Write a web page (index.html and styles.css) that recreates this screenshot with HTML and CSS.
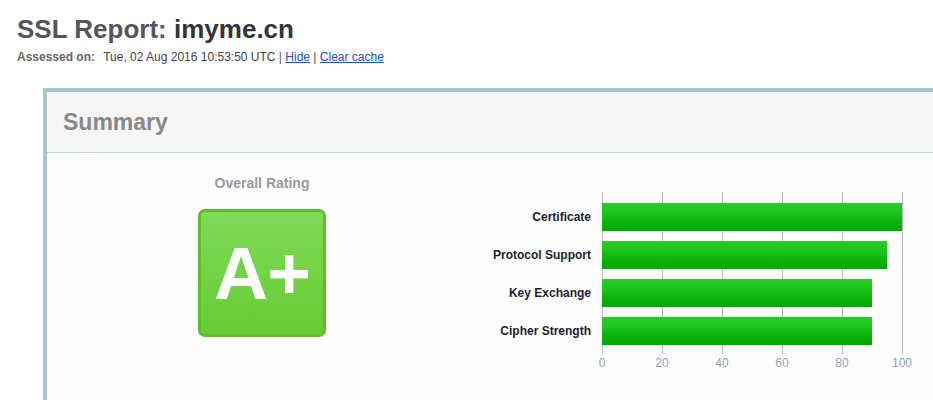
FILE: index.html
```html
<!DOCTYPE html>
<html>
<head>
<meta charset="utf-8">
<title>SSL Report: imyme.cn</title>
<link rel="stylesheet" href="styles.css">
</head>
<body>
<div class="page">
  <h1 class="title"><span class="title-pre">SSL Report:</span> <span class="title-host">imyme.cn</span></h1>
  <div class="assessed">
    <span class="assessed-label">Assessed on:</span>
    <span class="assessed-date">Tue, 02 Aug 2016 10:53:50 UTC</span>
    <span class="sep">|</span> <a href="#" class="link">Hide</a> <span class="sep">|</span> <a href="#" class="link">Clear cache</a>
  </div>

  <section class="report">
    <div class="report-head">Summary</div>
    <div class="report-body">
      <div class="rating">
        <div class="rating-title">Overall Rating</div>
        <div class="grade">A+</div>
      </div>
      <div class="chart">
        <div class="chart-main">
          <div class="labels">
            <div class="label">Certificate</div>
            <div class="label">Protocol Support</div>
            <div class="label">Key Exchange</div>
            <div class="label">Cipher Strength</div>
          </div>
          <div class="plot-wrap">
            <div class="plot">
              <div class="bar" style="width: 300px"></div>
              <div class="bar" style="width: 285px"></div>
              <div class="bar" style="width: 270px"></div>
              <div class="bar" style="width: 270px"></div>
            </div>
            <div class="axis">
              <span class="tick">0</span>
              <span class="tick">20</span>
              <span class="tick">40</span>
              <span class="tick">60</span>
              <span class="tick">80</span>
              <span class="tick">100</span>
            </div>
          </div>
        </div>
      </div>
    </div>
  </section>
</div>
</body>
</html>
```

FILE: styles.css
```css
html, body {
  margin: 0;
  padding: 0;
  overflow: hidden;
  background: #ffffff;
}

body {
  font-family: "Liberation Sans", Arial, sans-serif;
  color: #333;
}

.page {
  padding-left: 17px;
}

.title {
  margin: 14px 0 0 0;
  font-size: 26px;
  line-height: 30px;
  font-weight: bold;
}

.title-pre {
  color: #555659;
}

.title-host {
  color: #333438;
}

.assessed {
  margin-top: 6px;
  font-size: 12px;
  line-height: 14px;
  color: #444;
}

.assessed-label {
  font-weight: bold;
  color: #666;
  margin-right: 5px;
}

.sep {
  color: #555;
}

.link {
  color: #1a4fd1;
  text-decoration: underline;
}

.report {
  margin: 24px 0 0 26px;
  box-sizing: border-box;
  min-height: 312px;
  border-top: 4px solid #a8c5c8;
  border-left: 4px solid #a8c5c8;
  background: #fdfdfd;
}

.report-head {
  height: 60px;
  line-height: 60px;
  background: #f6f6f6;
  border-bottom: 1px solid #bfd6d6;
  padding-left: 16px;
  font-size: 23px;
  font-weight: bold;
  color: #88888b;
}

.report-body {
  display: flex;
}

.rating {
  width: 430px;
  display: flex;
  flex-direction: column;
  align-items: center;
  padding-top: 22px;
}

.rating-title {
  font-size: 14px;
  line-height: 16px;
  font-weight: bold;
  color: #9a9a9e;
}

.grade {
  margin-top: 18px;
  width: 122px;
  height: 122px;
  border: 3px solid #5dbf2b;
  border-radius: 7px;
  background: linear-gradient(#80d957, #66cc33);
  color: #fff;
  font-size: 75px;
  font-weight: bold;
  line-height: 122px;
  text-align: center;
  letter-spacing: -1px;
}

.chart {
  padding-top: 39px;
}

.chart-main {
  display: flex;
}

.labels {
  width: 114px;
  padding-top: 11px;
  margin-right: 11px;
  display: flex;
  flex-direction: column;
  gap: 10px;
}

.label {
  height: 28px;
  line-height: 28px;
  text-align: right;
  font-size: 12px;
  font-weight: bold;
  color: #1d1d33;
  white-space: nowrap;
}

.plot-wrap {
  width: 301px;
}

.plot {
  width: 301px;
  height: 162px;
  box-sizing: border-box;
  padding-top: 11px;
  display: flex;
  flex-direction: column;
  gap: 10px;
  background: repeating-linear-gradient(to right, #bbbbbb 0, #bbbbbb 1px, transparent 1px, transparent 60px);
}

.bar {
  height: 28px;
  background: linear-gradient(#26ce26 0%, #1fc41f 35%, #0db20d 65%, #00a800 100%);
}

.axis {
  display: flex;
  margin-left: -30px;
  margin-top: 2px;
}

.tick {
  width: 60px;
  flex: none;
  text-align: center;
  font-size: 12px;
  line-height: 14px;
  color: #8fa2b6;
}
```
